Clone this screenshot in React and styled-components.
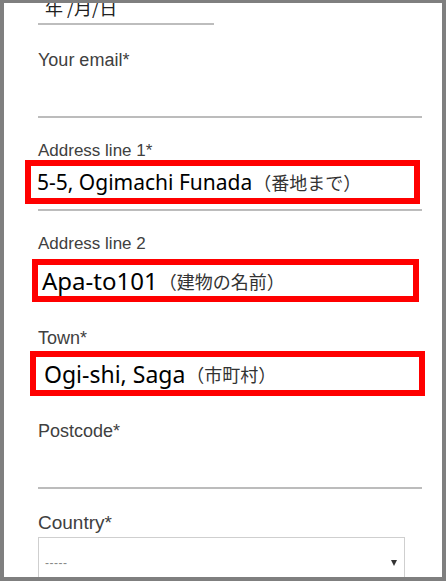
import styled, { createGlobalStyle } from 'styled-components';

const GlobalStyle = createGlobalStyle`
  html, body {
    margin: 0;
    padding: 0;
    background: #ffffff;
  }
`;

const Frame = styled.div`
  width: 446px;
  height: 581px;
  box-sizing: border-box;
  border-style: solid;
  border-color: #7f7f7f;
  border-width: 3px 4px 4px 4px;
  background: #ffffff;
  overflow: hidden;
`;

const Form = styled.div`
  padding: 0 20px 0 34px;
  display: flex;
  flex-direction: column;
`;

const DateText = styled.div`
  margin-top: -6px;
  padding-left: 7px;
  height: 20px;
  line-height: 20px;
  font-family: "Noto Sans CJK JP", sans-serif;
  font-size: 18px;
  color: #222;
`;

const DateLine = styled.div`
  width: 176px;
  height: 2px;
  margin-top: 6px;
  background: #bdbdbd;
`;

const Label = styled.div`
  margin-top: ${(p) => p.$top}px;
  height: ${(p) => p.$lh || 18}px;
  line-height: ${(p) => p.$lh || 18}px;
  font-family: "Liberation Sans", Arial, sans-serif;
  font-size: ${(p) => p.$size || 18}px;
  color: #404040;
  white-space: nowrap;
`;

const LineInput = styled.div`
  height: ${(p) => p.$h}px;
  margin-top: ${(p) => p.$top || 0}px;
  border-bottom: 2px solid #bcbcbc;
`;

const Marked = styled.div`
  box-sizing: border-box;
  margin-top: ${(p) => p.$top || 0}px;
  margin-left: ${(p) => p.$left}px;
  width: ${(p) => p.$w}px;
  height: ${(p) => p.$h}px;
  border: 6px solid #ff0000;
  padding-left: ${(p) => p.$pad}px;
  display: flex;
  align-items: center;
  white-space: nowrap;
`;

const Value = styled.span`
  font-family: "Noto Sans", "Open Sans", sans-serif;
  font-size: ${(p) => p.$size}px;
  color: #000;
`;

const Note = styled.span`
  font-family: "Noto Sans CJK JP", sans-serif;
  font-size: 18px;
  color: #333;
  margin-left: 1px;
`;

const Select = styled.div`
  box-sizing: border-box;
  margin-top: 4px;
  width: 367px;
  height: 52px;
  border: 1px solid #cfcfcf;
  display: flex;
  align-items: center;
  justify-content: space-between;
  padding: 0 6px 0 6px;
`;

const Placeholder = styled.span`
  font-family: "Liberation Sans", Arial, sans-serif;
  font-size: 12px;
  color: #888;
  letter-spacing: 0.5px;
`;

const Arrow = styled.span`
  width: 0;
  height: 0;
  border-left: 3px solid transparent;
  border-right: 3px solid transparent;
  border-top: 6px solid #333;
  margin-right: 1px;
`;

export default function App() {
  return (
    <>
      <GlobalStyle />
      <Frame>
        <Form>
          <DateText>年 /月/日</DateText>
          <DateLine />

          <Label $top={25} $lh={20}>Your email*</Label>
          <LineInput $h={46} />

          <Label $top={24} $size={17}>Address line 1*</Label>
          <Marked $left={-13} $w={395} $h={44} $pad={6}>
            <Value $size={21}>5-5, Ogimachi Funada</Value>
            <Note>（番地まで）</Note>
          </Marked>
          <LineInput $h={5} />

          <Label $top={24} $size={17}>Address line 2</Label>
          <Marked $top={6} $left={-6} $w={387} $h={43} $pad={4}>
            <Value $size={24}>Apa-to101</Value>
            <Note>（建物の名前）</Note>
          </Marked>

          <Label $top={27}>Town*</Label>
          <Marked $top={4} $left={-8} $w={395} $h={45} $pad={8}>
            <Value $size={23}>Ogi-shi, Saga</Value>
            <Note>（市町村）</Note>
          </Marked>

          <Label $top={26}>Postcode*</Label>
          <LineInput $h={47} />

          <Label $top={24} $size={19} $lh={20}>Country*</Label>
          <Select>
            <Placeholder>-----</Placeholder>
            <Arrow />
          </Select>
        </Form>
      </Frame>
    </>
  );
}
